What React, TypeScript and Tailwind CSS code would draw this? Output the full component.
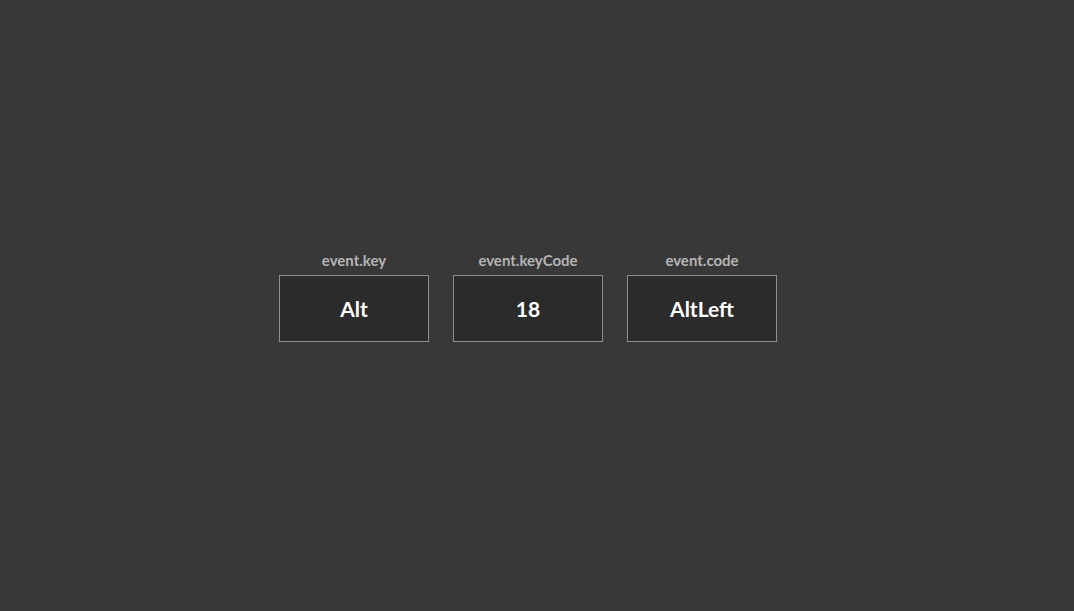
export default function App() {
  const items = [
    { label: "event.key", value: "Alt" },
    { label: "event.keyCode", value: "18" },
    { label: "event.code", value: "AltLeft" },
  ];

  return (
    <div
      className="h-[611px] w-full bg-[#383838] flex items-center justify-center pb-[16px] pr-[18px]"
      style={{ fontFamily: "Lato, 'Liberation Sans', sans-serif" }}
    >
      <div className="flex gap-6">
        {items.map((item) => (
          <div key={item.label} className="flex flex-col items-center">
            <div className="text-[15px] leading-[14px] font-bold text-[#b4b4b4] mb-[8px]">
              {item.label}
            </div>
            <div className="w-[150px] h-[67px] bg-[#2b2b2b] border border-[#8f8f8f] flex items-center justify-center">
              <span className="text-[21px] font-bold text-white">{item.value}</span>
            </div>
          </div>
        ))}
      </div>
    </div>
  );
}
